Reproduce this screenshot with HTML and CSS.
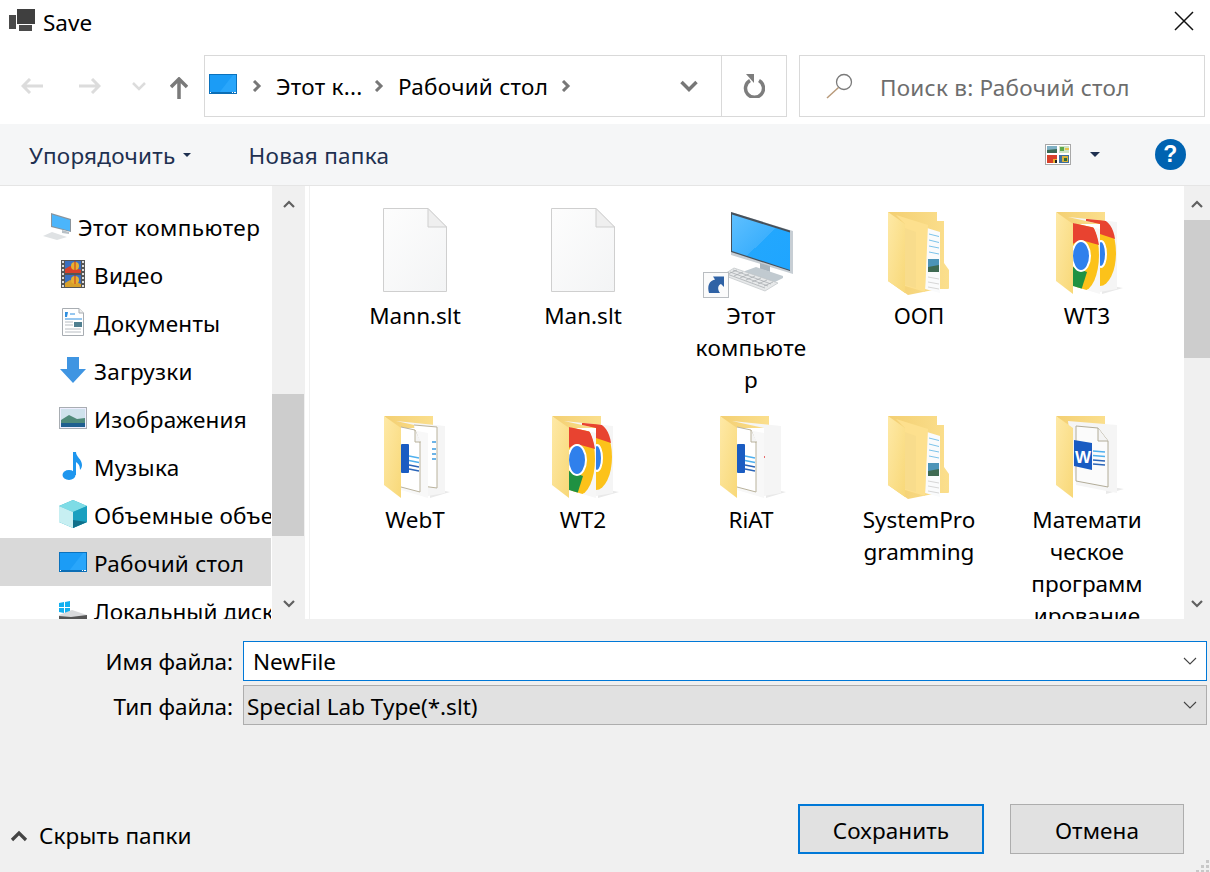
FILE: index.html
```html
<!DOCTYPE html>
<html lang="ru">
<head>
<meta charset="utf-8">
<title>Save</title>
<link rel="stylesheet" href="styles.css">
</head>
<body>
<svg class="defs" width="0" height="0" aria-hidden="true">
  <defs>
    <linearGradient id="gFlap" x1="0" y1="0" x2="1" y2="1"><stop offset="0" stop-color="#fee9a6"/><stop offset="1" stop-color="#f8d878"/></linearGradient>
    <linearGradient id="gBack" x1="0" y1="0" x2="1" y2="0"><stop offset="0" stop-color="#f3cf72"/><stop offset="1" stop-color="#fbdf8d"/></linearGradient>
    <linearGradient id="gScreen" x1="0" y1="0" x2="1" y2="1"><stop offset="0" stop-color="#5fc0ff"/><stop offset=".5" stop-color="#3db0fd"/><stop offset=".5" stop-color="#22a7fe"/><stop offset="1" stop-color="#1fa5ff"/></linearGradient>
    <linearGradient id="gPaper" x1="0" y1="0" x2="1" y2="1"><stop offset="0" stop-color="#fdfdfd"/><stop offset="1" stop-color="#f3f4f5"/></linearGradient>
    <clipPath id="cFront"><path d="M17 11L44 17V82L17 74Z"/></clipPath>
    <clipPath id="cBack"><path d="M12 5L61 10V77L44 80V12Z"/></clipPath>

    <symbol id="desk" viewBox="0 0 28 20">
      <rect x=".5" y=".5" width="27" height="19" fill="#1b9cf6" stroke="#0b72bd"/>
      <path d="M10 19L24 1H27V19Z" fill="#29a6fb"/>
      <rect x="1" y="18" width="26" height="2" fill="#0b6eb6"/>
      <path d="M1 18.500h1M23 18.500h1M25 18.500h2" stroke="#fff"/>
    </symbol>

    <symbol id="file" viewBox="0 0 96 92">
      <path d="M16.500 .5H61L79.500 19V83.500H16.500Z" fill="url(#gPaper)" stroke="#cfcfcf"/>
      <path d="M61 .5V19H79.500Z" fill="#efefef" stroke="#cfcfcf"/>
    </symbol>

    <symbol id="pc" viewBox="0 0 96 92">
      <path d="M28 4L90 23V66L28 47Z" fill="#c7ced4"/>
      <path d="M28 4L87 22.500V63L28 44Z" fill="#46505a"/>
      <path d="M29 6.500L87 24.500V62L29 43Z" fill="url(#gScreen)"/>
      <path d="M57 55L67 58V64L57 61Z" fill="#a9b4bc"/>
      <path d="M42 63L53 59L80 68V70L70 75L42 66Z" fill="#c1cad0"/>
      <path d="M20 67L31 60L75 75L62 83Z" fill="#e7e9ea" stroke="#bfc3c6" stroke-width=".7"/>
      <path d="M25 66L34 62M31 68L40 64M37 70L46 66M43 72L52 68M49 74L58 70M55 76L64 72M61 78L70 74M30 62L68 76M27 64L65 78M24 66L62 80" stroke="#a3a8ac" stroke-width=".7"/>
      <rect x=".5" y="64.500" width="25" height="25" fill="#fbfbfb" stroke="#b9bdc1"/>
      <path d="M6 85C4 78 6 73 12 71.500L10 68.500H21V79L18 76C15 77 14 81 17 85Z" fill="#2f62a5"/>
    </symbol>

    <symbol id="folder" viewBox="0 0 96 92">
      <g transform="translate(17 4)">
        <path d="M0 0H49V9H56V51L61 58V76Q61 77 60 77H50L20 83L0 69Z" fill="url(#gBack)"/>
        <path d="M39 16L52 20V81L37 77Z" fill="#fafbfc"/>
        <path d="M41 22L51 24.500M41 28L51 30.500M41 34L51 36M41 40L51 42" stroke="#7cc3ea"/>
        <rect x="40" y="47" width="11" height="13" fill="#4c94b8"/>
        <path d="M40 55L51 53V60H40Z" fill="#3f6a52"/>
        <path d="M40 65L51 67M40 70L51 72M40 75L51 77" stroke="#d7d7d7"/>
        <path d="M8 3L40 13L37 80L17 74V12Z" fill="#fde08e"/>
        <path d="M17 16L28 20V76L17 73Z" fill="#f8dc8c"/>
        <path d="M0 0L17 12V81L0 69Z" fill="url(#gFlap)"/>
      </g>
    </symbol>

    <symbol id="chrome" viewBox="0 0 96 92">
      <g transform="translate(17 4)">
        <path d="M0 0H49V12H12Z" fill="url(#gBack)"/>
        <path d="M67 76L46 82V72Z" fill="#e9e9e9"/>
        <path d="M12 5L61 10V77L44 80V12Z" fill="#f5f5f5"/>
        <g clip-path="url(#cBack)">
          <ellipse cx="44" cy="41" rx="16" ry="33" fill="#fcc21a"/>
          <path d="M44 7C52 7 58 17 59 27L44 22L30 20V7Z" fill="#e84330"/>
          <ellipse cx="45" cy="42" rx="5" ry="13" fill="#2f80ec" stroke="#fff" stroke-width="2"/>
        </g>
        <path d="M17 11L44 17V82L17 74Z" fill="#f7f7f7"/>
        <g clip-path="url(#cFront)">
          <ellipse cx="27" cy="43" rx="16" ry="36" fill="#fcc21a"/>
          <path d="M27 7C35 7 41 20 43 33L25 28L12 34V7Z" fill="#e84330"/>
          <path d="M14 54L31 60L25 79L10 79Z" fill="#1f9142"/>
          <ellipse cx="25" cy="44" rx="9" ry="15" fill="#2f80ec" stroke="#fff" stroke-width="2"/>
        </g>
        <path d="M0 0L17 12V82L0 69Z" fill="url(#gFlap)"/>
      </g>
    </symbol>

    <symbol id="wordfolder" viewBox="0 0 96 92">
      <g transform="translate(17 4)">
        <path d="M0 0H49V12H12Z" fill="url(#gBack)"/>
        <path d="M66 76L46 82V72Z" fill="#e9e9e9"/>
        <path d="M12 5L61 10V77L44 80V12Z" fill="#f5f5f5"/>
        <path d="M30 9L53 11V72L38 70" fill="#fff" stroke="#b9b29c"/>
        <path d="M48 26L52 26M48 33H52M48 38H52M48 43H52" stroke="#3c9ae0" stroke-width="1.500"/>
        <path d="M17 12L44 17V82L17 74Z" fill="#f8f8f8"/>
        <path d="M17 11L31 14L36 27V76L17 71" fill="#fff" stroke="#b9b29c"/>
        <path d="M31 14V26H37" fill="#f4f4f4" stroke="#b9b29c"/>
        <rect x="17" y="28" width="8" height="29" rx="1" fill="#1a5cc2"/>
        <path d="M25 40L35 42M25 44.500L35 46.500" stroke="#4fb0ee" stroke-width="1.500"/>
        <path d="M25 49L35 51M25 53L35 55" stroke="#2a65b8" stroke-width="1.500"/>
        <path d="M0 0L17 12V82L0 69Z" fill="url(#gFlap)"/>
      </g>
    </symbol>

    <symbol id="riatfolder" viewBox="0 0 96 92">
      <g transform="translate(17 4)">
        <path d="M0 0H49V12H12Z" fill="url(#gBack)"/>
        <path d="M66 76L46 82V72Z" fill="#e9e9e9"/>
        <path d="M12 5L61 10V77L44 80V12Z" fill="#f5f5f5"/>
        <rect x="43" y="40" width="2" height="2" fill="#e86c6c"/>
        <path d="M17 12L44 17V82L17 74Z" fill="#f8f8f8"/>
        <path d="M17 11L31 14L36 27V76L17 71" fill="#fff" stroke="#b9b29c"/>
        <path d="M31 14V26H37" fill="#f4f4f4" stroke="#b9b29c"/>
        <rect x="17" y="28" width="8" height="29" rx="1" fill="#1a5cc2"/>
        <path d="M25 40L35 42M25 44.500L35 46.500" stroke="#4fb0ee" stroke-width="1.500"/>
        <path d="M25 49L35 51M25 53L35 55" stroke="#2a65b8" stroke-width="1.500"/>
        <path d="M0 0L17 12V82L0 69Z" fill="url(#gFlap)"/>
      </g>
    </symbol>

    <symbol id="docfolder" viewBox="0 0 96 92">
      <g transform="translate(17 4)">
        <path d="M0 0H49V12H12Z" fill="url(#gBack)"/>
        <path d="M68 73L50 78V70Z" fill="#e9e9e9"/>
        <path d="M12 5L61 9V77L20 69Z" fill="#f5f5f5"/>
        <path d="M20 10L42 12L52 25V71L20 65Z" fill="#fbfbfb" stroke="#b2ac98"/>
        <path d="M42 12V25H52" fill="#f4f4f4" stroke="#b2ac98"/>
        <path d="M37 35L49 36M37 39.500L49 40.500" stroke="#4fb0ee" stroke-width="1.500"/>
        <path d="M37 44L49 45M37 48L49 49" stroke="#2a65b8" stroke-width="1.500"/>
        <path d="M18 24L36 27V54L18 50Z" fill="#1a5cc2"/>
        <path d="M0 0L17 12V82L0 69Z" fill="url(#gFlap)"/>
        <text x="19" y="47" class="wordmark">W</text>
      </g>
    </symbol>
  </defs>
</svg>

<div class="dialog">
  <header class="titlebar">
    <svg class="app-icon" viewBox="0 0 26 22"><path d="M8 0H26V15H8Z" fill="#3f3f3f"/><path d="M0 6H7V20H0Z" fill="#4a4a4a"/><path d="M10 16H23V22H10Z" fill="#4a4a4a"/></svg>
    <span class="title-text">Save</span>
    <svg class="close-icon" viewBox="0 0 20 20"><path d="M1 1L19 19M19 1L1 19" stroke="#111" stroke-width="1.500" fill="none"/></svg>
  </header>

  <div class="navrow">
    <div class="navbtns">
      <svg class="nb nb-back" viewBox="0 0 22 16"><path d="M9 1L2 8L9 15M2 8H22" stroke="#dcdcdc" stroke-width="3" fill="none"/></svg>
      <svg class="nb nb-fwd" viewBox="0 0 22 16"><path d="M13 1L20 8L13 15M20 8H0" stroke="#dcdcdc" stroke-width="3" fill="none"/></svg>
      <svg class="nb nb-drop" viewBox="0 0 14 9"><path d="M1 1L7 7L13 1" stroke="#dcdcdc" stroke-width="2.500" fill="none"/></svg>
      <svg class="nb nb-up" viewBox="0 0 18 22"><path d="M1 10L9 2L17 10M9 2V22" stroke="#7a7a7a" stroke-width="3.500" fill="none"/></svg>
    </div>
    <div class="address">
      <div class="crumbs">
        <svg class="crumb-icon"><use href="#desk"/></svg>
        <svg class="sep sep-first" viewBox="0 0 10 12"><path d="M2 1L7 6L2 11" stroke="#777" stroke-width="3" fill="none"/></svg>
        <span class="crumb crumb-a">Этот к...</span>
        <svg class="sep" viewBox="0 0 10 12"><path d="M2 1L7 6L2 11" stroke="#777" stroke-width="3" fill="none"/></svg>
        <span class="crumb crumb-b">Рабочий стол</span>
        <svg class="sep" viewBox="0 0 10 12"><path d="M2 1L7 6L2 11" stroke="#777" stroke-width="3" fill="none"/></svg>
      </div>
      <div class="addr-drop"><svg class="addr-chev" viewBox="0 0 18 12"><path d="M1.500 2L9 9.500L16.500 2" stroke="#777" stroke-width="3.500" fill="none"/></svg></div>
      <div class="addr-refresh"><svg class="refresh" viewBox="0 0 22 24"><path d="M7 6.500A9 9 0 1 0 16 6.500" stroke="#7d7d7d" stroke-width="3.500" fill="none"/><path d="M3 0H11V9Z" fill="#7d7d7d"/></svg></div>
    </div>
    <div class="search">
      <svg class="search-icon" viewBox="0 0 28 26"><circle cx="18" cy="9" r="7.500" stroke="#7a7a7a" stroke-width="1.300" fill="none"/><path d="M12.500 14.500L1 25" stroke="#b89a7a" stroke-width="1.500"/></svg>
      <span class="search-text">Поиск в: Рабочий стол</span>
    </div>
  </div>

  <div class="toolbar">
    <span class="tool">Упорядочить</span>
    <i class="caret caret-org"></i>
    <span class="tool tool-new">Новая папка</span>
    <div class="tool-right">
      <svg class="views" viewBox="0 0 26 21">
        <rect x=".5" y=".5" width="25" height="20" fill="#fff" stroke="#a8a8a8"/>
        <rect x="2" y="2" width="10" height="7" fill="#7fb0c4"/><path d="M2 6L12 5V9H2Z" fill="#3a6a55"/>
        <rect x="14" y="2" width="10" height="7" fill="#cfe3c4"/><path d="M15 3H19V7H15Z" fill="#5ca84a"/><path d="M20 4H24V6H20Z" fill="#e6c34b"/>
        <rect x="2" y="11" width="10" height="8" fill="#d8402a"/><path d="M8 15H12V19H8Z" fill="#e8b030"/><path d="M10 16H12V19H10Z" fill="#222"/>
        <rect x="14" y="11" width="10" height="8" fill="#3c6f9e"/><path d="M17 12H23V18H17Z" fill="#d8b13a"/><path d="M19 14H22V17H19Z" fill="#2c6a3a"/>
      </svg>
      <i class="caret caret-view"></i>
      <span class="help">?</span>
    </div>
  </div>

  <main class="panes">
    <nav class="tree">
      <div class="tree-list">
        <div class="tree-row tree-root">
          <svg class="ti-pc" viewBox="0 0 30 28"><path d="M9 1L29 7V20L9 15Z" fill="#8a949c"/><path d="M10 2.500L28 8V19L10 14Z" fill="#4bb5fb"/><path d="M1 24L10 20L25 25L15 28Z" fill="#dfe2e4"/><path d="M20 18L27 20V22L20 21Z" fill="#b8c0c6"/></svg>
          <span>Этот компьютер</span>
        </div>
        <div class="tree-row">
          <svg class="ti" viewBox="0 0 28 28">
            <rect x="2" width="24" height="28" fill="#555"/>
            <path d="M3 2h2M3 6h2M3 10h2M3 14h2M3 18h2M3 22h2M3 26h2M23 2h2M23 6h2M23 10h2M23 14h2M23 18h2M23 22h2M23 26h2" stroke="#ddd" stroke-width="2"/>
            <rect x="6" y="1" width="16" height="12" fill="#3b6fc0"/><rect x="6" y="15" width="16" height="12" fill="#3b6fc0"/>
            <path d="M6 9L11 6L22 10V13H6Z" fill="#d8402a"/><path d="M6 23L11 20L22 24V27H6Z" fill="#d8a02a"/>
            <circle cx="16" cy="6" r="4" fill="#e8b030"/><circle cx="16" cy="20" r="4" fill="#e8b030"/>
            <path d="M16 1V10M16 15V24" stroke="#c03020"/>
          </svg>
          <span>Видео</span>
        </div>
        <div class="tree-row">
          <svg class="ti" viewBox="0 0 28 28">
            <path d="M3.500 .5H20L24.500 5V27.500H3.500Z" fill="#fff" stroke="#a8adb2"/>
            <path d="M20 .5V5H24.500" fill="#eee" stroke="#a8adb2"/>
            <path d="M6 4L9 4L8 9H6Z" fill="#2f8fe0"/><path d="M11 6H16" stroke="#2f8fe0"/>
            <path d="M6 11H23" stroke="#2f8fe0"/>
            <path d="M6 14H14M6 17H14M6 21H22M6 24H22" stroke="#b8bdc2"/>
            <rect x="15" y="14" width="8" height="5" fill="#4f7f90"/>
          </svg>
          <span>Документы</span>
        </div>
        <div class="tree-row">
          <svg class="ti" viewBox="0 0 28 28"><path d="M8 1H20V13H27L14 27L1 13H8Z" fill="#3f95e2"/></svg>
          <span>Загрузки</span>
        </div>
        <div class="tree-row">
          <svg class="ti" viewBox="0 0 28 28">
            <rect x=".5" y="3.500" width="27" height="21" fill="#eef" stroke="#a8adb2"/>
            <rect x="2" y="5" width="24" height="18" fill="#cfe2ec"/>
            <path d="M2 16L10 11L18 15L26 14V23H2Z" fill="#4f8a7a"/>
            <path d="M2 19H26V23H2Z" fill="#1f5f8f"/>
          </svg>
          <span>Изображения</span>
        </div>
        <div class="tree-row">
          <svg class="ti" viewBox="0 0 28 28"><ellipse cx="10" cy="23" rx="6.500" ry="5" fill="#1e96ee"/><path d="M14 0H17C17 5 23 7 23 13C23 15 22 17 21 18C21 12 18 11 17 10V23H14Z" fill="#1e96ee"/></svg>
          <span>Музыка</span>
        </div>
        <div class="tree-row">
          <svg class="ti" viewBox="0 0 28 28"><path d="M14 0L28 6V22L14 28L0 22V6Z" fill="#37b3c6"/><path d="M14 0L28 6L14 12L0 6Z" fill="#7edce6"/><path d="M0 6L14 12V28L0 22Z" fill="#c7eff2"/><path d="M14 12L28 6V22L14 28Z" fill="#1aa0c0"/><path d="M14 20L28 22L14 28Z" fill="#0f6f8a"/></svg>
          <span>Объемные объекты</span>
        </div>
        <div class="tree-row is-selected">
          <svg class="ti-desk"><use href="#desk"/></svg>
          <span>Рабочий стол</span>
        </div>
        <div class="tree-row">
          <svg class="ti" viewBox="0 0 28 28"><path d="M0 7L5 6V11H0ZM6 6L11 5V11H6ZM0 12H5V17L0 16ZM6 12H11V18L6 17Z" fill="#12b0f0"/><path d="M13 14L28 19V23H0V19Z" fill="#d9dadc"/><path d="M0 20L12 21L28 19V28H0Z" fill="#555"/></svg>
          <span class="tight">Локальный диск (C:)</span>
        </div>
      </div>
    </nav>
    <div class="scrollbar scrollbar-tree">
      <svg class="arrow" viewBox="0 0 12 8"><path d="M1 7L6 2L11 7" stroke="#606060" stroke-width="2.200" fill="none"/></svg>
      <div class="track track-tree"><div class="thumb thumb-tree"></div></div>
      <svg class="arrow" viewBox="0 0 12 8"><path d="M1 1L6 6L11 1" stroke="#606060" stroke-width="2.200" fill="none"/></svg>
    </div>

    <section class="files">
      <div class="grid">
        <div class="cell"><svg class="big"><use href="#file"/></svg><div class="name">Mann.slt</div></div>
        <div class="cell"><svg class="big"><use href="#file"/></svg><div class="name">Man.slt</div></div>
        <div class="cell"><svg class="big"><use href="#pc"/></svg><div class="name name-cy">Этот<br>компьюте<br>р</div></div>
        <div class="cell"><svg class="big"><use href="#folder"/></svg><div class="name">ООП</div></div>
        <div class="cell"><svg class="big"><use href="#chrome"/></svg><div class="name">WT3</div></div>
        <div class="cell"><svg class="big"><use href="#wordfolder"/></svg><div class="name">WebT</div></div>
        <div class="cell"><svg class="big"><use href="#chrome"/></svg><div class="name">WT2</div></div>
        <div class="cell"><svg class="big"><use href="#riatfolder"/></svg><div class="name">RiAT</div></div>
        <div class="cell"><svg class="big"><use href="#folder"/></svg><div class="name">SystemPro<br>gramming</div></div>
        <div class="cell"><svg class="big"><use href="#docfolder"/></svg><div class="name">Математи<br>ческое<br>программ<br>ирование</div></div>
      </div>
    </section>
    <div class="scrollbar scrollbar-files">
      <svg class="arrow" viewBox="0 0 12 8"><path d="M1 7L6 2L11 7" stroke="#606060" stroke-width="2.200" fill="none"/></svg>
      <div class="track track-files"><div class="thumb thumb-files"></div></div>
      <svg class="arrow" viewBox="0 0 12 8"><path d="M1 1L6 6L11 1" stroke="#606060" stroke-width="2.200" fill="none"/></svg>
    </div>
  </main>

  <footer class="bottom">
    <div class="field">
      <span class="label">Имя файла:</span>
      <div class="combo combo-edit"><span class="lat">NewFile</span><svg class="combo-chev" viewBox="0 0 14 8"><path d="M1 1L7 7L13 1" stroke="#444" stroke-width="1.100" fill="none"/></svg></div>
    </div>
    <div class="field">
      <span class="label label-type">Тип файла:</span>
      <div class="combo combo-type"><span class="lat">Special Lab Type(*.slt)</span><svg class="combo-chev" viewBox="0 0 14 8"><path d="M1 1L7 7L13 1" stroke="#444" stroke-width="1.100" fill="none"/></svg></div>
    </div>
    <div class="actions">
      <div class="toggle">
        <svg class="toggle-chev" viewBox="0 0 18 12"><path d="M2 10L9 3L16 10" stroke="#444" stroke-width="3.200" fill="none"/></svg>
        <span>Скрыть папки</span>
      </div>
      <div class="buttons">
        <div class="btn btn-primary"><span class="btn-text">Сохранить</span></div>
        <div class="btn"><span class="btn-text">Отмена</span></div>
      </div>
    </div>
    <svg class="grip" viewBox="0 0 14 14"><path d="M10 2h3v3h-3zM5 7h3v3h-3zM10 7h3v3h-3zM0 12h3v2h-3zM5 12h3v2h-3zM10 12h3v2h-3z" fill="#c8c8c8"/></svg>
  </footer>
</div>
</body>
</html>
```
FILE: styles.css
```css
* { box-sizing: border-box; }
html, body { margin: 0; padding: 0; }
body { width: 1210px; height: 872px; overflow: hidden; background: #fff; font-family: "Noto Sans", "Open Sans", sans-serif; font-size: 22.5px; letter-spacing: .25px; color: #000; }
svg { display: block; flex: none; }
.defs { position: absolute; }
.wordmark { font-family: "Liberation Sans", sans-serif; font-size: 17px; font-weight: 700; fill: #fff; letter-spacing: 0; }
.lat { letter-spacing: 0; }

.dialog { width: 1210px; height: 872px; display: flex; flex-direction: column; position: relative; }

.titlebar { height: 46px; display: flex; align-items: center; padding: 0 16px 0 9px; }
.app-icon { width: 26px; height: 22px; margin-right: 8px; margin-top: -6px; }
.title-text { line-height: 46px; letter-spacing: 0; }
.close-icon { width: 20px; height: 20px; margin-left: auto; margin-top: -4px; }

.navrow { height: 78px; display: flex; align-items: flex-start; padding: 9px 5px 0 0; }
.navbtns { width: 204px; height: 62px; display: flex; align-items: center; padding-left: 21px; }
.nb-back, .nb-fwd { width: 22px; height: 16px; }
.nb-fwd { margin-left: 36px; }
.nb-drop { width: 14px; height: 9px; margin-left: 31px; }
.nb-up { width: 18px; height: 22px; margin-left: 24px; margin-top: 4px; }

.address { width: 583px; height: 62px; border: 1px solid #d9d9d9; display: flex; align-items: stretch; }
.crumbs { flex: 1; display: flex; align-items: center; padding-left: 4px; }
.crumb-icon { width: 28px; height: 20px; margin-top: -4px; }
.sep { width: 10px; height: 12px; }
.sep-first { margin-left: 15px; }
.crumb { white-space: nowrap; }
.crumb-a { margin-left: 14px; width: 84px; }
.crumb-a + .sep { margin-left: 14px; }
.crumb-b { margin-left: 14px; width: 150px; }
.crumb-b + .sep { margin-left: 13px; }
.addr-drop { width: 66px; display: flex; align-items: center; justify-content: center; padding-left: 2px; }
.addr-chev { width: 18px; height: 12px; }
.addr-refresh { width: 65px; border-left: 1px solid #d9d9d9; display: flex; align-items: center; justify-content: center; }
.refresh { width: 22px; height: 24px; }

.search { width: 406px; height: 62px; margin-left: 12px; border: 1px solid #d9d9d9; display: flex; align-items: center; padding-left: 26px; color: #6d6d6d; }
.search-icon { width: 28px; height: 26px; }
.search-text { margin-left: 26px; padding-top: 2px; white-space: nowrap; }

.toolbar { height: 62px; background: #f5f6f7; border-bottom: 1px solid #e5e5e5; display: flex; align-items: center; padding: 0 24px 0 29px; color: #1e3050; }
.tool { white-space: nowrap; padding-top: 2px; }
.caret { display: block; width: 0; height: 0; border-left: 4px solid transparent; border-right: 4px solid transparent; border-top: 4px solid #1e3050; }
.caret-org { margin-left: 7px; }
.tool-new { margin-left: 58px; }
.tool-right { margin-left: auto; display: flex; align-items: center; }
.views { width: 26px; height: 21px; }
.caret-view { margin-left: 19px; border-left-width: 5px; border-right-width: 5px; border-top-width: 5px; }
.help { width: 31px; height: 31px; margin-left: 55px; border-radius: 50%; background: #0063b1; color: #fff; font-size: 23px; font-weight: 700; line-height: 31px; text-align: center; font-family: "Liberation Sans", sans-serif; }

.panes { height: 433px; display: flex; overflow: hidden; }
.tree { width: 272px; overflow: hidden; padding-top: 16px; }
.tree-row { height: 48px; display: flex; align-items: center; padding-left: 59px; white-space: nowrap; width: 271px; overflow: hidden; }
.tree-row span { margin-left: 7px; padding-top: 3px; }
.tree-row .tight { letter-spacing: 0; }
.tree-root { padding-left: 42px; }
.tree-root span { margin-left: 6px; letter-spacing: .42px; }
.ti-pc { width: 30px; height: 28px; }
.ti { width: 28px; height: 28px; }
.ti-desk { width: 28px; height: 20px; }
.is-selected { background: #d9d9d9; }

.scrollbar { display: flex; flex-direction: column; align-items: center; background: #f0f0f0; }
.scrollbar-tree { width: 33px; }
.scrollbar-files { width: 26px; }
.arrow { width: 12px; height: 8px; margin: 14px 0 11px; flex: none; }
.track { flex: 1; width: 100%; }
.track-tree { padding-top: 175px; }
.thumb-tree { width: 32px; height: 142px; background: #cdcdcd; }
.track-files { padding-top: 1px; }
.thumb-files { width: 100%; height: 138px; background: #cdcdcd; }

.files { width: 875px; margin-left: 4px; border-left: 1px solid #f0f0f0; overflow: hidden; padding: 22px 0 0 21px; }
.grid { display: grid; grid-template-columns: repeat(5, 168px); grid-auto-rows: 204px; }
.cell { display: flex; flex-direction: column; align-items: center; }
.big { width: 96px; height: 92px; }
.name { line-height: 32px; text-align: center; white-space: nowrap; letter-spacing: 0; }
.name-cy { letter-spacing: .3px; }

.bottom { flex: 1; background: #f0f0f0; position: relative; padding: 22px 3px 0 0; display: flex; flex-direction: column; }
.field { display: flex; align-items: center; height: 40px; margin-bottom: 4px; }
.label { width: 233px; text-align: right; white-space: nowrap; letter-spacing: -.05px; }
.label-type { padding-top: 2px; }
.combo { margin-left: 10px; flex: 1; height: 40px; display: flex; align-items: center; justify-content: space-between; padding-right: 9px; }
.combo-edit { background: #fff; border: 1px solid #0078d7; padding-left: 9px; }
.combo-type { background: #e1e1e1; border: 1px solid #adadad; padding-left: 3px; }
.combo-type .lat { padding-top: 2px; }
.combo-chev { width: 14px; height: 8px; }
.actions { display: flex; justify-content: space-between; align-items: flex-end; margin-top: 75px; padding: 0 23px 0 10px; }
.toggle { display: flex; align-items: center; padding-bottom: 3px; letter-spacing: .1px; }
.toggle-chev { width: 18px; height: 12px; }
.toggle span { margin-left: 11px; }
.buttons { display: flex; gap: 26px; }
.btn { width: 174px; height: 50px; display: flex; align-items: center; justify-content: center; background: #e1e1e1; border: 1px solid #adadad; letter-spacing: .1px; }
.btn-text { padding-top: 2px; }
.btn-primary { width: 186px; border: 2px solid #0078d7; }
.grip { position: absolute; right: 0; bottom: 0; width: 14px; height: 14px; }
```
